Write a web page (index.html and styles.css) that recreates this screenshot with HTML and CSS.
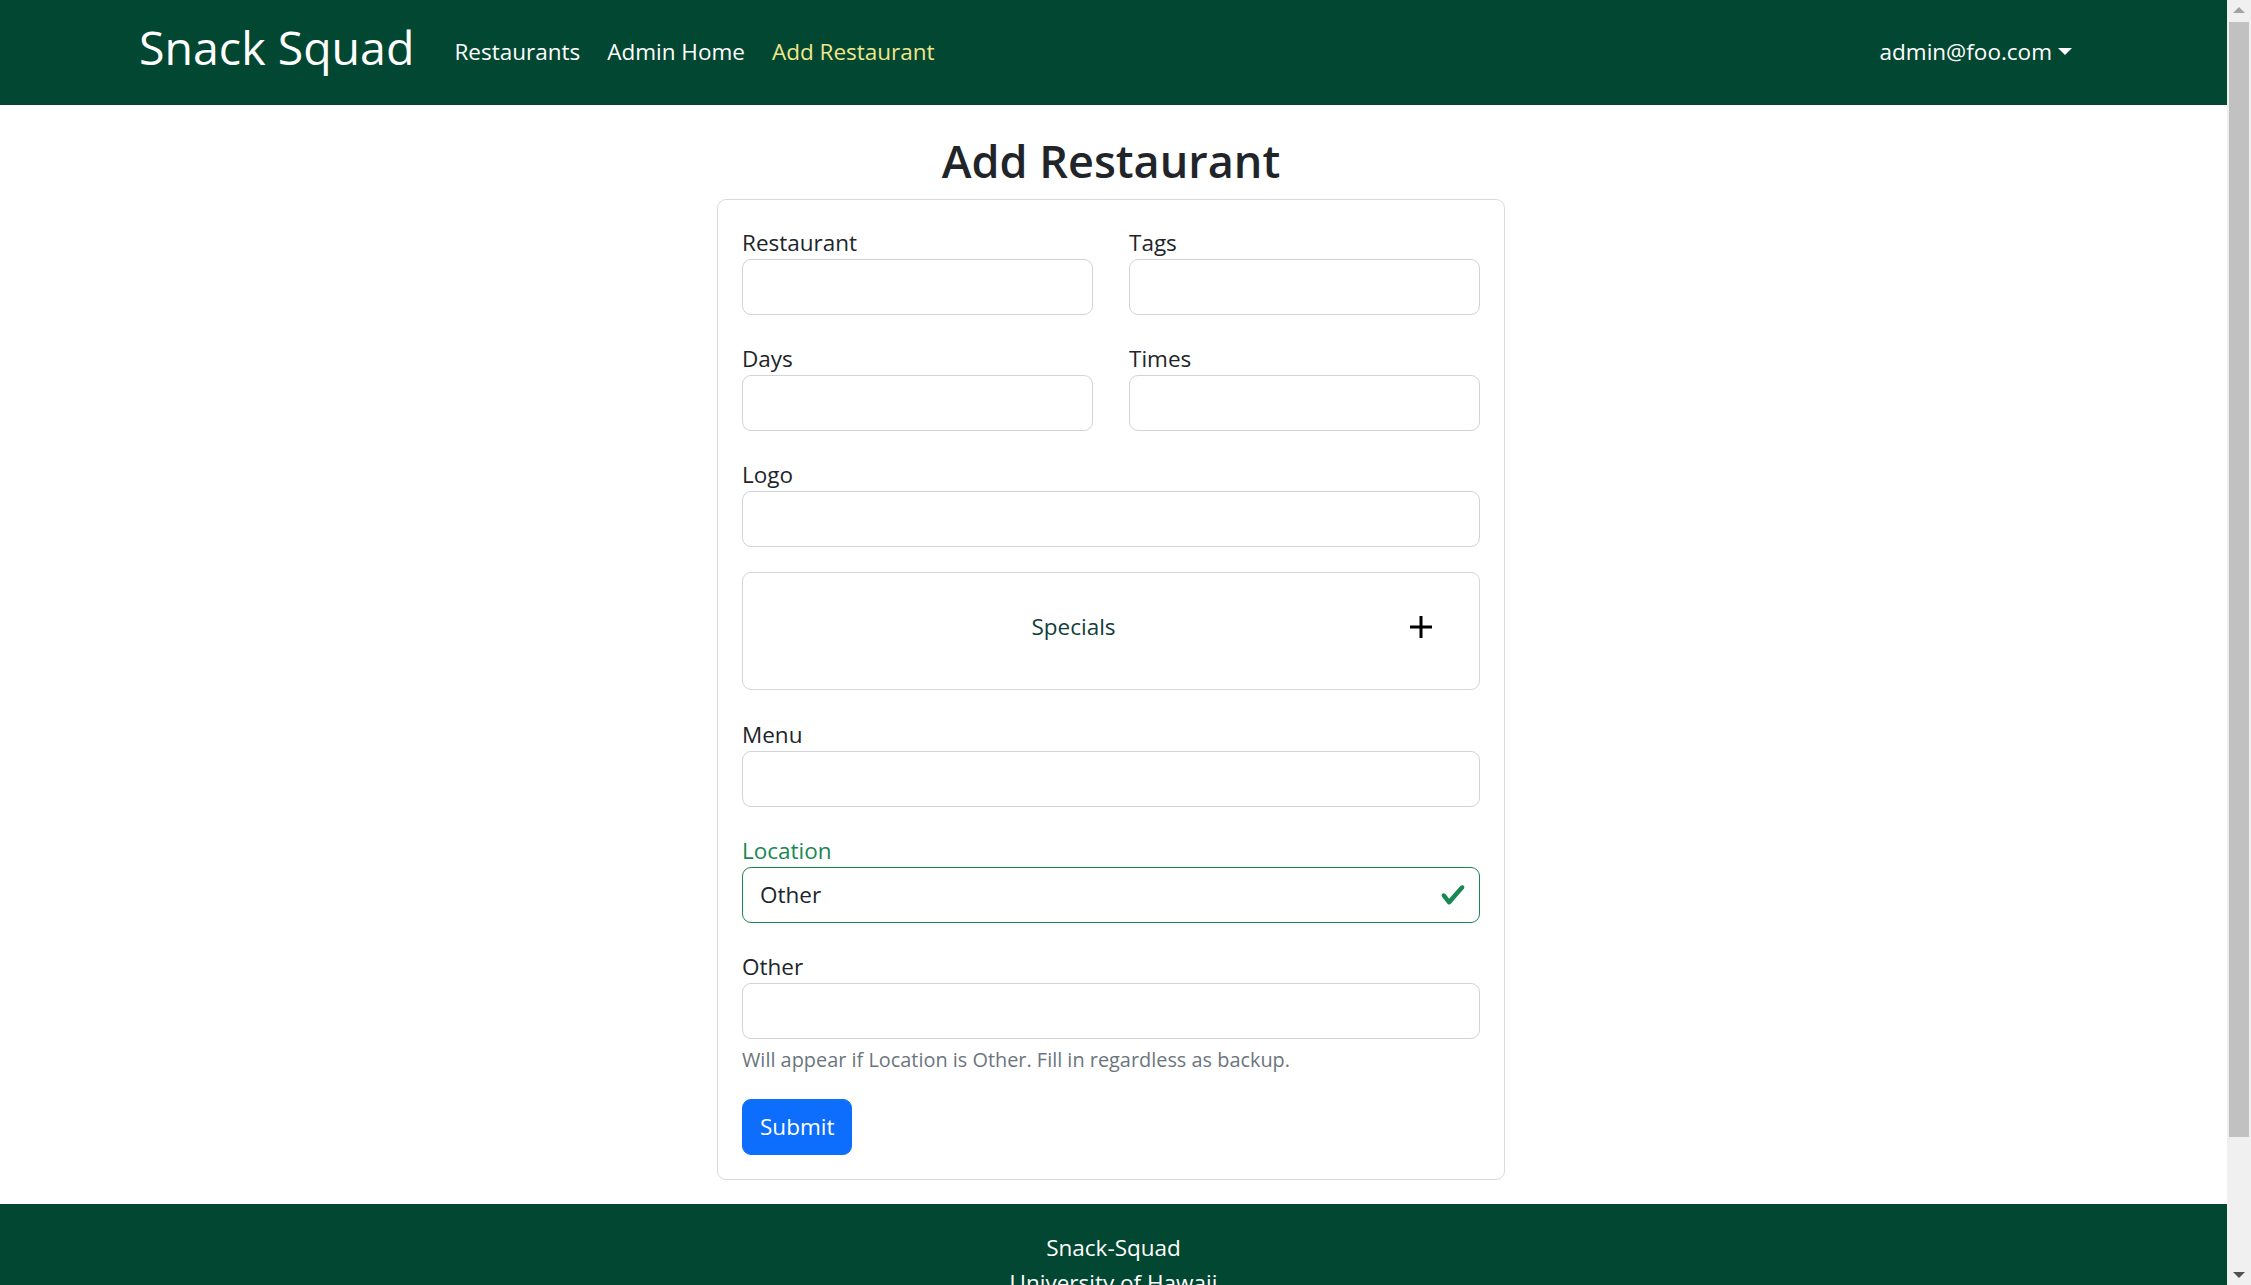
FILE: index.html
```html
<!DOCTYPE html>
<html lang="en">
<head>
<meta charset="utf-8">
<title>Add Restaurant - Snack Squad</title>
<link rel="stylesheet" href="styles.css">
</head>
<body>
<div class="page">
  <nav class="navbar">
    <div class="nav-left">
      <a class="brand" href="#">Snack Squad</a>
      <ul class="nav-links">
        <li><a class="nav-link" href="#">Restaurants</a></li>
        <li><a class="nav-link" href="#">Admin Home</a></li>
        <li><a class="nav-link active" href="#">Add Restaurant</a></li>
      </ul>
    </div>
    <a class="nav-link dropdown-toggle" href="#">admin@foo.com</a>
  </nav>

  <main class="main">
    <h2 class="page-title">Add Restaurant</h2>
    <form class="card">
      <div class="row">
        <div class="field">
          <label class="form-label">Restaurant</label>
          <input class="form-control" type="text">
        </div>
        <div class="field">
          <label class="form-label">Tags</label>
          <input class="form-control" type="text">
        </div>
      </div>
      <div class="row">
        <div class="field">
          <label class="form-label">Days</label>
          <input class="form-control" type="text">
        </div>
        <div class="field">
          <label class="form-label">Times</label>
          <input class="form-control" type="text">
        </div>
      </div>
      <div class="field">
        <label class="form-label">Logo</label>
        <input class="form-control" type="text">
      </div>
      <div class="specials">
        <span class="specials-title">Specials</span>
        <span class="specials-add" aria-label="Add special">
          <svg width="22" height="22" viewBox="0 0 22 22" aria-hidden="true"><path d="M11 0v22M0 11h22" stroke="#000" stroke-width="3" fill="none"/></svg>
        </span>
      </div>
      <div class="field">
        <label class="form-label">Menu</label>
        <input class="form-control" type="text">
      </div>
      <div class="field">
        <label class="form-label valid">Location</label>
        <div class="form-control is-valid">
          <span class="value">Other</span>
          <svg class="valid-icon" width="26" height="26" viewBox="0 0 8 8" aria-hidden="true"><path fill="#198754" d="M2.3 6.73.6 4.53c-.4-1.04.46-1.4 1.1-.8l1.1 1.4 3.4-3.8c.6-.63 1.6-.27 1.2.7l-4 4.6c-.43.5-.8.4-1.1.1z"/></svg>
        </div>
      </div>
      <div class="field field-help">
        <label class="form-label">Other</label>
        <input class="form-control" type="text">
        <div class="form-text">Will appear if Location is Other. Fill in regardless as backup.</div>
      </div>
      <button class="btn-submit" type="button">Submit</button>
    </form>
  </main>

  <footer class="footer">
    <div>Snack-Squad</div>
    <div>University of Hawaii</div>
    <div>Honolulu, HI 96822</div>
    <div><a href="#">Snack Squad Home Page</a></div>
  </footer>
</div>

<div class="scrollbar" aria-hidden="true">
  <div class="sb-btn"><span class="sb-arrow up"></span></div>
  <div class="sb-track"><div class="sb-thumb"></div></div>
  <div class="sb-btn"><span class="sb-arrow down"></span></div>
</div>
</body>
</html>
```

FILE: styles.css
```css
body {
  margin: 0;
  display: flex;
  align-items: flex-start;
  font-family: "Open Sans", "Noto Sans", "Liberation Sans", sans-serif;
  font-size: 22.5px;
  line-height: 34.5px;
  color: #212529;
  background: #fff;
}

a {
  text-decoration: none;
}

.page {
  flex: 1;
  min-width: 0;
}

/* ---------- Scrollbar (drawn) ---------- */
.scrollbar {
  position: sticky;
  top: 0;
  flex: none;
  width: 24px;
  height: 100vh;
  background: #f0f0f0;
  display: flex;
  flex-direction: column;
}
.sb-btn {
  height: 22px;
  display: flex;
  align-items: center;
  justify-content: center;
}
.sb-arrow {
  width: 0;
  height: 0;
  border-left: 6px solid transparent;
  border-right: 6px solid transparent;
}
.sb-arrow.up {
  border-bottom: 6px solid #a3a3a3;
  margin-top: -2px;
}
.sb-arrow.down {
  border-top: 6px solid #505050;
  margin-top: 2px;
}
.sb-track {
  flex: 1;
  padding: 0 2px;
}
.sb-thumb {
  height: 1115px;
  background: #c1c1c1;
}

/* ---------- Navbar ---------- */
.navbar {
  height: 105px;
  background: #024731;
  display: flex;
  align-items: center;
  justify-content: space-between;
  padding: 0 143px 0 139px;
}
.nav-left {
  display: flex;
  align-items: center;
}
.brand {
  color: #fff;
  font-size: 46.5px;
  font-weight: 500;
  line-height: 55px;
  padding-bottom: 10px;
  margin-right: 28px;
}
.nav-links {
  list-style: none;
  margin: 0;
  padding: 0;
  display: flex;
  align-items: center;
}
.nav-link {
  display: block;
  color: #fff;
  padding: 0 12px;
}
.nav-links li + li {
  margin-left: 3px;
}
.nav-link.active {
  color: #f0e68c;
}
.dropdown-toggle {
  display: flex;
  align-items: center;
}
.dropdown-toggle::after {
  content: "";
  margin-left: 6px;
  border-top: 7px solid #fff;
  border-left: 7px solid transparent;
  border-right: 7px solid transparent;
  margin-top: -2px;
}

/* ---------- Main ---------- */
.main {
  padding: 28px 5px 0 0;
}
.page-title {
  margin: 0 0 10px;
  text-align: center;
  font-size: 45px;
  line-height: 56px;
  font-weight: 600;
  color: #212529;
}
.card {
  width: 788px;
  box-sizing: border-box;
  margin: 0 auto;
  border: 1px solid #dadada;
  border-radius: 9px;
  padding: 24px;
}
.row {
  display: flex;
  gap: 36px;
}
.row .field {
  flex: 1;
}
.field {
  margin-bottom: 25px;
}
.form-label {
  display: block;
  line-height: 33px;
  padding-top: 2px;
}
.form-label.valid {
  color: #198754;
}
.form-control {
  display: block;
  width: 100%;
  box-sizing: border-box;
  height: 56px;
  margin: 0;
  padding: 0 17px;
  border: 1px solid #ced4da;
  border-radius: 9px;
  font: inherit;
  color: #212529;
  background: #fff;
}
.form-control.is-valid {
  display: flex;
  align-items: center;
  justify-content: space-between;
  border-color: #198754;
  padding-right: 13px;
}
.valid-icon {
  flex: none;
}

.specials {
  display: flex;
  align-items: center;
  height: 118px;
  box-sizing: border-box;
  border: 1px solid #d6d6d6;
  border-radius: 9px;
  padding: 0 41px 8px 0;
  margin-bottom: 26px;
}
.specials-title {
  flex: 1;
  text-align: center;
  color: #10403a;
}
.specials-add {
  width: 34px;
  display: flex;
  justify-content: center;
}

.field-help {
  margin-bottom: 24px;
}
.form-text {
  margin-top: 6px;
  font-size: 19.9px;
  line-height: 30px;
  color: #6c757d;
}

.btn-submit {
  display: block;
  height: 56px;
  padding: 0 17px;
  border: 1px solid #0d6efd;
  border-radius: 9px;
  background: #0d6efd;
  color: #fff;
  font: inherit;
  cursor: pointer;
}

/* ---------- Footer ---------- */
.footer {
  margin-top: 24px;
  background: #024731;
  color: #fff;
  text-align: center;
  padding: 27px 0 59px;
}
.footer a {
  color: #fff;
  text-decoration: underline;
}
```
